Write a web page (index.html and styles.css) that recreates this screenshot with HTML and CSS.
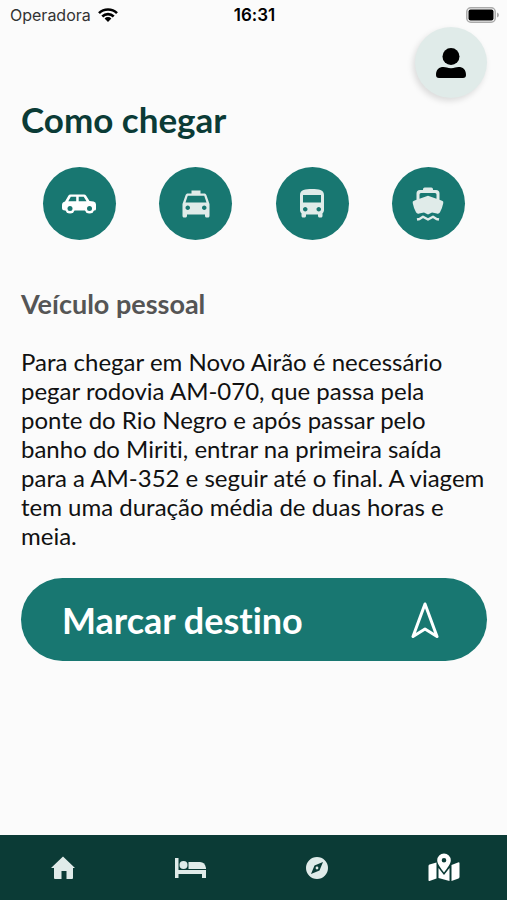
FILE: index.html
```html
<!DOCTYPE html>
<html lang="pt-BR">
<head>
<meta charset="utf-8">
<meta name="viewport" content="width=device-width, initial-scale=1">
<title>Como chegar</title>
<link rel="stylesheet" href="styles.css">
</head>
<body>
<div class="app">
  <header class="status">
    <div class="carrier">
      <span>Operadora</span>
      <svg class="wifi" viewBox="0 0 20 14" aria-hidden="true">
        <g fill="none" stroke="currentColor" stroke-width="2.6">
          <path d="M1 5.2a12.8 12.8 0 0 1 18 0"/>
          <path d="M4.3 8.5a8 8 0 0 1 11.4 0"/>
        </g>
        <path d="M10 14l-3.4-3.5a4.8 4.8 0 0 1 6.8 0z"/>
      </svg>
    </div>
    <time class="clock">16:31</time>
    <svg class="battery" viewBox="0 0 33 16" aria-hidden="true">
      <rect x="0.8" y="0.8" width="28.4" height="14.4" rx="4" fill="none" stroke="#aaa" stroke-width="1.5"/>
      <rect x="2.5" y="2.5" width="25" height="11" rx="2"/>
      <path d="M31 5.5q2 .8 2 2.5t-2 2.5z" fill="#aaa"/>
    </svg>
  </header>

  <button class="profile" type="button" aria-label="Perfil">
    <svg viewBox="0 0 30 30" aria-hidden="true">
      <circle cx="15" cy="8.5" r="8.5"/>
      <path d="M0 27c0-5.5 3-8 7.5-8 2.5 0 4 1.2 7.5 1.2S20 19 22.5 19c4.5 0 7.5 2.5 7.5 8 0 2-1 3-3 3H3c-2 0-3-1-3-3z"/>
    </svg>
  </button>

  <main class="content">
    <h1>Como chegar</h1>
    <div class="modes">
      <button class="mode active" type="button" aria-label="Veículo pessoal">
        <svg viewBox="0 0 36 36" aria-hidden="true">
          <path fill-rule="evenodd" d="M8.500 8.500H22q1.400 0 2.200 1.200L27.500 15l4 .5Q34 16 34 18.500V23q0 1.500-1.500 1.500H3Q0 24.500 0 22v-3q0-3 3-3.500L6.300 9.800Q7 8.500 8.500 8.500zM8.800 10.700L6.300 15.200h7.900v-4.500zM16.700 10.700v4.500h7.800l-2.800-4.500z"/>
          <g stroke="#187771" stroke-width="0">
            <circle cx="8" cy="22.800" r="4.800"/>
            <circle cx="27.500" cy="22.800" r="4.800"/>
          </g>
          <g fill="#187771">
            <circle cx="8" cy="22.500" r="2.500"/>
            <circle cx="27.500" cy="22.500" r="2.500"/>
          </g>
        </svg>
      </button>
      <button class="mode" type="button" aria-label="Táxi">
        <svg viewBox="0 0 24 24" aria-hidden="true">
          <path d="M18.920 6.010C18.720 5.420 18.160 5 17.500 5H15V3H9v2H6.500c-.66 0-1.210.42-1.420 1.010L3 12v8c0 .55.45 1 1 1h1c.55 0 1-.45 1-1v-1h12v1c0 .55.45 1 1 1h1c.55 0 1-.45 1-1v-8l-2.080-5.990zM6.500 16c-.83 0-1.500-.67-1.500-1.500S5.670 13 6.500 13s1.500.67 1.500 1.500S7.330 16 6.500 16zm11 0c-.83 0-1.500-.67-1.500-1.500s.67-1.500 1.500-1.500 1.500.67 1.500 1.500-.67 1.500-1.500 1.500zM5 11l1.500-4.500h11L19 11H5z"/>
        </svg>
      </button>
      <button class="mode" type="button" aria-label="Ônibus">
        <svg viewBox="0 0 24 24" aria-hidden="true">
          <path d="M4 16c0 .88.39 1.670 1 2.220V20c0 .55.45 1 1 1h1c.55 0 1-.45 1-1v-1h8v1c0 .55.45 1 1 1h1c.55 0 1-.45 1-1v-1.780c.61-.55 1-1.340 1-2.220V6c0-3.500-3.580-4-8-4s-8 .5-8 4v10zm3.500 1c-.83 0-1.500-.67-1.500-1.500S6.670 14 7.500 14s1.500.67 1.500 1.500S8.330 17 7.500 17zm9 0c-.83 0-1.500-.67-1.500-1.500s.67-1.500 1.500-1.500 1.500.67 1.500 1.500-.67 1.500-1.500 1.500zm1.500-6H6V6h12v5z"/>
        </svg>
      </button>
      <button class="mode" type="button" aria-label="Barco">
        <svg viewBox="0 0 36 36" aria-hidden="true">
          <path fill-rule="evenodd" d="M13 3.200Q13 1.500 14.700 1.500h6.600Q23 1.500 23 3.200V4h3q3.500 0 3.500 3.500v6.300l2.500.9q1.700.6 1.300 2.300-.9 4.800-3.300 9.300-1 1.900-3.200 1.200L22 26.500l-4 2-4-2-4.800 1q-2.200.7-3.200-1.200-2.400-4.500-3.300-9.300-.4-1.700 1.300-2.300l2.500-.9V7.500Q6.500 4 10 4h3zM11 7Q9.500 7 9.500 8.500v4.200L18 9.800l8.500 2.900V8.500Q26.500 7 25 7z"/>
          <path d="M7 33.500l2.500-.5 3.500-2.300 5 2.800 5-2.800 3.500 2.300 2.500.5" fill="none" stroke="currentColor" stroke-width="2.400" stroke-linejoin="round"/>
        </svg>
      </button>
    </div>
    <h2>Veículo pessoal</h2>
    <p>Para chegar em Novo Airão é necessário pegar rodovia AM-070, que passa pela ponte do Rio Negro e após passar pelo banho do Miriti, entrar na primeira saída para a AM-352 e seguir até o final. A viagem tem uma duração média de duas horas e meia.</p>
    <button class="cta" type="button">
      <span>Marcar destino</span>
      <svg viewBox="0 0 28 36" aria-hidden="true">
        <path d="M14 2L26 34.500l-12-7.500-12 7.500z" fill="none" stroke="currentColor" stroke-width="3" stroke-linejoin="round"/>
      </svg>
    </button>
  </main>

  <nav class="tabs" aria-label="Principal">
    <a href="#inicio" aria-label="Início">
      <svg viewBox="0 0 32 32" aria-hidden="true">
        <path d="M16 4.500L28 16h-2v10q0 1-1 1h-5.500v-8h-5v8H8q-1 0-1-1V16H4z"/>
      </svg>
    </a>
    <a href="#hospedagem" aria-label="Hospedagem">
      <svg viewBox="0 0 32 32" aria-hidden="true">
        <path d="M1 6h3.500v12H32v8h-4v-4H4.500v4H1z"/>
        <circle cx="9.500" cy="13" r="4"/>
        <path d="M14.500 10H26q5 0 6 6v1H14.500z"/>
      </svg>
    </a>
    <a href="#explorar" aria-label="Explorar">
      <svg viewBox="0 0 32 32" aria-hidden="true">
        <path fill-rule="evenodd" d="M16 5a11 11 0 1 0 0 22 11 11 0 0 0 0-22zM22 10l-3.500 8.500L10 22l3.500-8.500zM16 14.600a1.400 1.400 0 1 0 0 2.800 1.400 1.400 0 0 0 0-2.800z"/>
      </svg>
    </a>
    <a class="active" href="#mapa" aria-label="Como chegar" aria-current="page">
      <svg viewBox="0 0 32 32" aria-hidden="true">
        <path fill-rule="evenodd" d="M16 1.500A6.800 6.800 0 0 0 9.200 8.300C9.200 12 13 16.500 16 20.500c3-4 6.800-8.500 6.800-12.200A6.800 6.800 0 0 0 16 1.500zM16 6a2.300 2.300 0 1 1 0 4.600A2.300 2.300 0 0 1 16 6z"/>
        <path d="M.5 14q0-1 1-1.400L8.500 10.500v16L1.500 29q-1 .3-1-.7zM10.500 16L16 23l5.500-7v13l-11-3zM23.500 13l6.500-2.500q1.500-.5 1.500.8V25q0 1-1 1.400l-7 2.600z"/>
      </svg>
    </a>
  </nav>
</div>
</body>
</html>
```
FILE: styles.css
```css
* {
  box-sizing: border-box;
}

body {
  margin: 0;
  background: #fbfbfb;
  color: #111;
  font-family: Lato, sans-serif;
  font-variant-ligatures: none;
}

button {
  border: 0;
  padding: 0;
  font: inherit;
  font-variant-ligatures: none;
  cursor: pointer;
}

svg {
  display: block;
  fill: currentColor;
}

.app {
  position: relative;
  display: flex;
  flex-direction: column;
  min-height: 100vh;
}

.status {
  display: grid;
  grid-template-columns: 1fr auto 1fr;
  align-items: center;
  height: 29px;
  padding: 0 8px 0 10px;
  font-family: Inter, sans-serif;
  font-size: 16px;
  color: #000;
}

.carrier {
  display: flex;
  align-items: center;
  gap: 7px;
  color: #333;
}

.wifi {
  width: 20px;
  height: 14px;
  color: #000;
}

.clock {
  font-size: 17px;
  font-weight: 600;
}

.battery {
  width: 33px;
  height: 16px;
  justify-self: end;
}

.profile {
  position: absolute;
  top: 27px;
  right: 20px;
  display: grid;
  place-items: center;
  width: 72px;
  height: 71px;
  border-radius: 50%;
  background: #e0ebe9;
  box-shadow: -2px 3px 6px rgba(0, 0, 0, 0.13);
  color: #000;
}

.profile svg {
  width: 30px;
  height: 30px;
}

.content {
  flex: 1;
  padding: 68px 20px 24px 21px;
}

h1 {
  margin: 0;
  font-size: 35px;
  line-height: 44px;
  color: #0b3b36;
}

.modes {
  display: flex;
  justify-content: space-between;
  margin-top: 26px;
  padding: 0 22px;
}

.mode {
  display: grid;
  place-items: center;
  width: 73px;
  height: 73px;
  border-radius: 50%;
  background: #187771;
  color: #e0ebe9;
}

.mode svg {
  width: 36px;
  height: 36px;
}

.mode.active {
  color: #fff;
}

h2 {
  margin: 48px 0 0;
  font-size: 27px;
  line-height: 32px;
  color: #555;
}

p {
  margin: 27px 0 0;
  font-size: 24px;
  line-height: 29px;
}

.cta {
  display: flex;
  align-items: center;
  justify-content: space-between;
  width: 100%;
  height: 83px;
  margin-top: 28px;
  padding: 0 48px 0 41px;
  border-radius: 42px;
  background: #187771;
  color: #fff;
  font-size: 36px;
  font-weight: 700;
}

.cta svg {
  width: 28px;
  height: 36px;
}

.tabs {
  display: flex;
  height: 65px;
  background: #0b3b36;
}

.tabs a {
  display: grid;
  flex: 1;
  place-items: center;
  color: #e0ebe9;
}

.tabs .active {
  color: #fff;
}

.tabs svg {
  width: 32px;
  height: 32px;
}
```
